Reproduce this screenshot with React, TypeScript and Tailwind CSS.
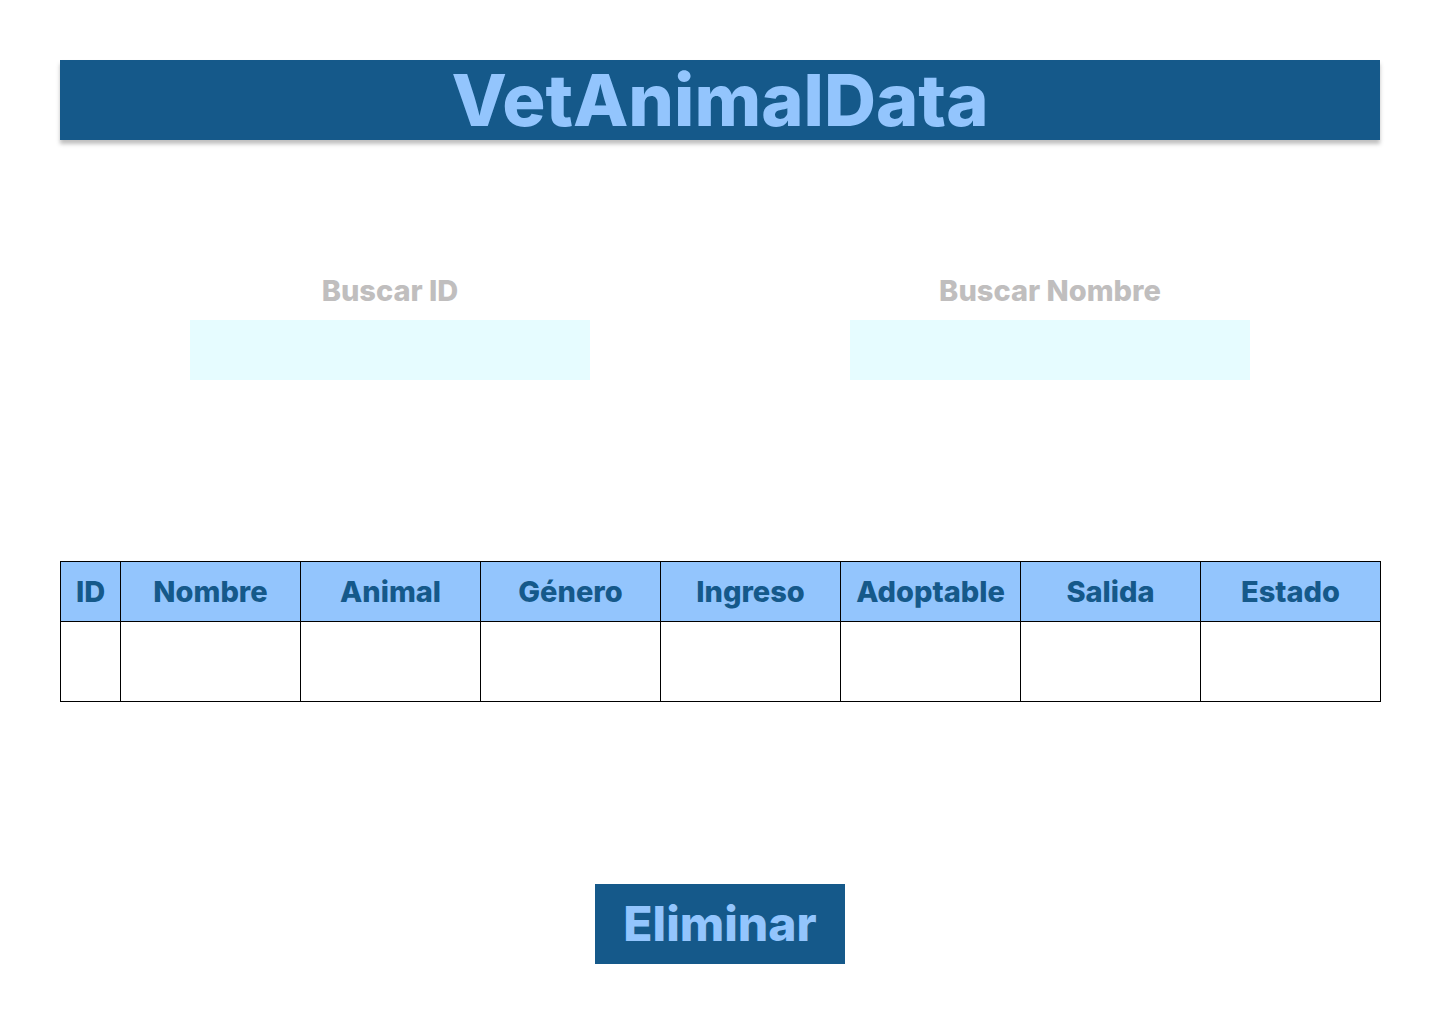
const columns = ["Nombre", "Animal", "Género", "Ingreso", "Adoptable", "Salida", "Estado"];

function SearchField({ id, label }: { id: string; label: string }) {
  return (
    <div className="flex flex-1 flex-col items-center">
      <label htmlFor={id} className="flex h-[60px] items-center text-[29px] leading-none text-[#c0bebe]">
        {label}
      </label>
      <input id={id} type="text" className="h-[60px] w-full max-w-[400px] bg-[#e6fcff] px-4 text-2xl text-[#15598a] outline-none" />
    </div>
  );
}

export default function App() {
  return (
    <div className="min-h-screen bg-white p-[60px] font-['Inter',sans-serif] font-extrabold">
      <header className="flex h-20 items-center justify-center bg-[#15598a] shadow-[0_4px_4px_rgba(0,0,0,0.25)]">
        <h1 className="text-[72px] leading-none text-[#93c5fd]">VetAnimalData</h1>
      </header>
      <form className="mt-[120px] flex">
        <SearchField id="buscar-id" label="Buscar ID" />
        <SearchField id="buscar-nombre" label="Buscar Nombre" />
      </form>
      <table className="-mr-px mt-[181px] w-[calc(100%+1px)] table-fixed border-collapse">
        <thead>
          <tr className="h-[60px] bg-[#93c5fd] text-[29px] leading-none text-[#15598a]">
            <th scope="col" className="w-[60px] border border-black p-0 font-extrabold">ID</th>
            {columns.map((name) => (
              <th key={name} scope="col" className="border border-black p-0 font-extrabold">{name}</th>
            ))}
          </tr>
        </thead>
        <tbody>
          <tr className="h-20">
            <td className="border border-black" />
            {columns.map((name) => (
              <td key={name} className="border border-black" />
            ))}
          </tr>
        </tbody>
      </table>
      <div className="mt-[182px] flex justify-center">
        <button type="button" className="flex h-20 w-[250px] items-center justify-center bg-[#15598a] text-5xl leading-none text-[#93c5fd]">
          Eliminar
        </button>
      </div>
    </div>
  );
}
